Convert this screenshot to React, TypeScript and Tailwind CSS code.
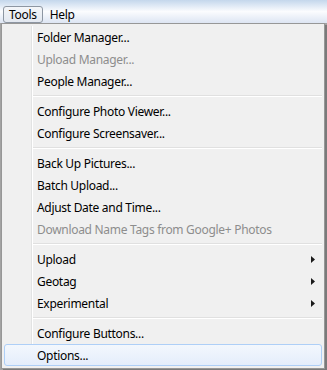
import React from 'react';

type Item =
  | { kind: 'item'; label: string; disabled?: boolean; sub?: boolean; active?: boolean }
  | { kind: 'sep' };

const items: Item[] = [
  { kind: 'item', label: 'Folder Manager...' },
  { kind: 'item', label: 'Upload Manager...', disabled: true },
  { kind: 'item', label: 'People Manager...' },
  { kind: 'sep' },
  { kind: 'item', label: 'Configure Photo Viewer...' },
  { kind: 'item', label: 'Configure Screensaver...' },
  { kind: 'sep' },
  { kind: 'item', label: 'Back Up Pictures...' },
  { kind: 'item', label: 'Batch Upload...' },
  { kind: 'item', label: 'Adjust Date and Time...' },
  { kind: 'item', label: 'Download Name Tags from Google+ Photos', disabled: true },
  { kind: 'sep' },
  { kind: 'item', label: 'Upload', sub: true },
  { kind: 'item', label: 'Geotag', sub: true },
  { kind: 'item', label: 'Experimental', sub: true },
  { kind: 'sep' },
  { kind: 'item', label: 'Configure Buttons...' },
  { kind: 'item', label: 'Options...', active: true },
];

function SubArrow() {
  return (
    <svg width="4" height="7" viewBox="0 0 4 7" className="block">
      <path d="M0 0 L4 3.5 L0 7 Z" fill="#1a1a1a" />
    </svg>
  );
}

export default function App() {
  return (
    <div
      className="w-[327px] h-[370px] overflow-hidden bg-[#a3a3a3] text-[12px] text-black tracking-[-0.3px]"
      style={{ fontFamily: '"Noto Sans", "Open Sans", sans-serif' }}
    >
      {/* Menu bar */}
      <div className="h-[23px] flex items-end bg-gradient-to-b from-[#c4d7ec] via-[#fbfcfe] to-[#dde5f3]">
        <div className="flex items-center h-[17px] ml-[3px]">
          <div className="h-[17px] px-[5px] pt-[1px] flex items-center rounded-[3px] border border-[#8d96a2] bg-gradient-to-b from-[#f4f6f9] to-[#e3e8f0] leading-none">
            Tools
          </div>
          <div className="h-[17px] px-[7px] pt-[1px] flex items-center leading-none">Help</div>
        </div>
      </div>

      {/* Dropdown */}
      <div className="flex">
        <div className="w-[1px]" />
        <div className="relative w-[324px] h-[346px] border border-[#979797] bg-[#f0f0f0] py-[2px] shadow-[2px_2px_0_#7a7a7a]">
          {/* icon gutter line */}
          <div className="absolute left-[29px] top-[2px] bottom-[2px] w-[2px] flex">
            <div className="w-[1px] bg-[#e2e3e3]" />
            <div className="w-[1px] bg-white" />
          </div>
          {items.map((it, i) =>
            it.kind === 'sep' ? (
              <div key={i} className="h-[8px] flex flex-col justify-center pl-[30px] pr-[2px]">
                <div className="h-[1px] bg-[#e0e0e0]" />
                <div className="h-[1px] bg-white" />
              </div>
            ) : (
              <div
                key={i}
                className={
                  'relative mx-[2px] h-[22px] flex items-center pl-[32px] pr-[6px] pt-[1px] rounded-[3px] border ' +
                  (it.active
                    ? 'border-[#aecff7] bg-gradient-to-b from-[#f3f7fd] to-[#e4edfb]'
                    : 'border-transparent') +
                  (it.disabled ? ' text-[#8d8d8d]' : ' text-black')
                }
              >
                <span className="flex-1 leading-none whitespace-nowrap">{it.label}</span>
                {it.sub && <SubArrow />}
              </div>
            )
          )}
        </div>
      </div>
    </div>
  );
}
